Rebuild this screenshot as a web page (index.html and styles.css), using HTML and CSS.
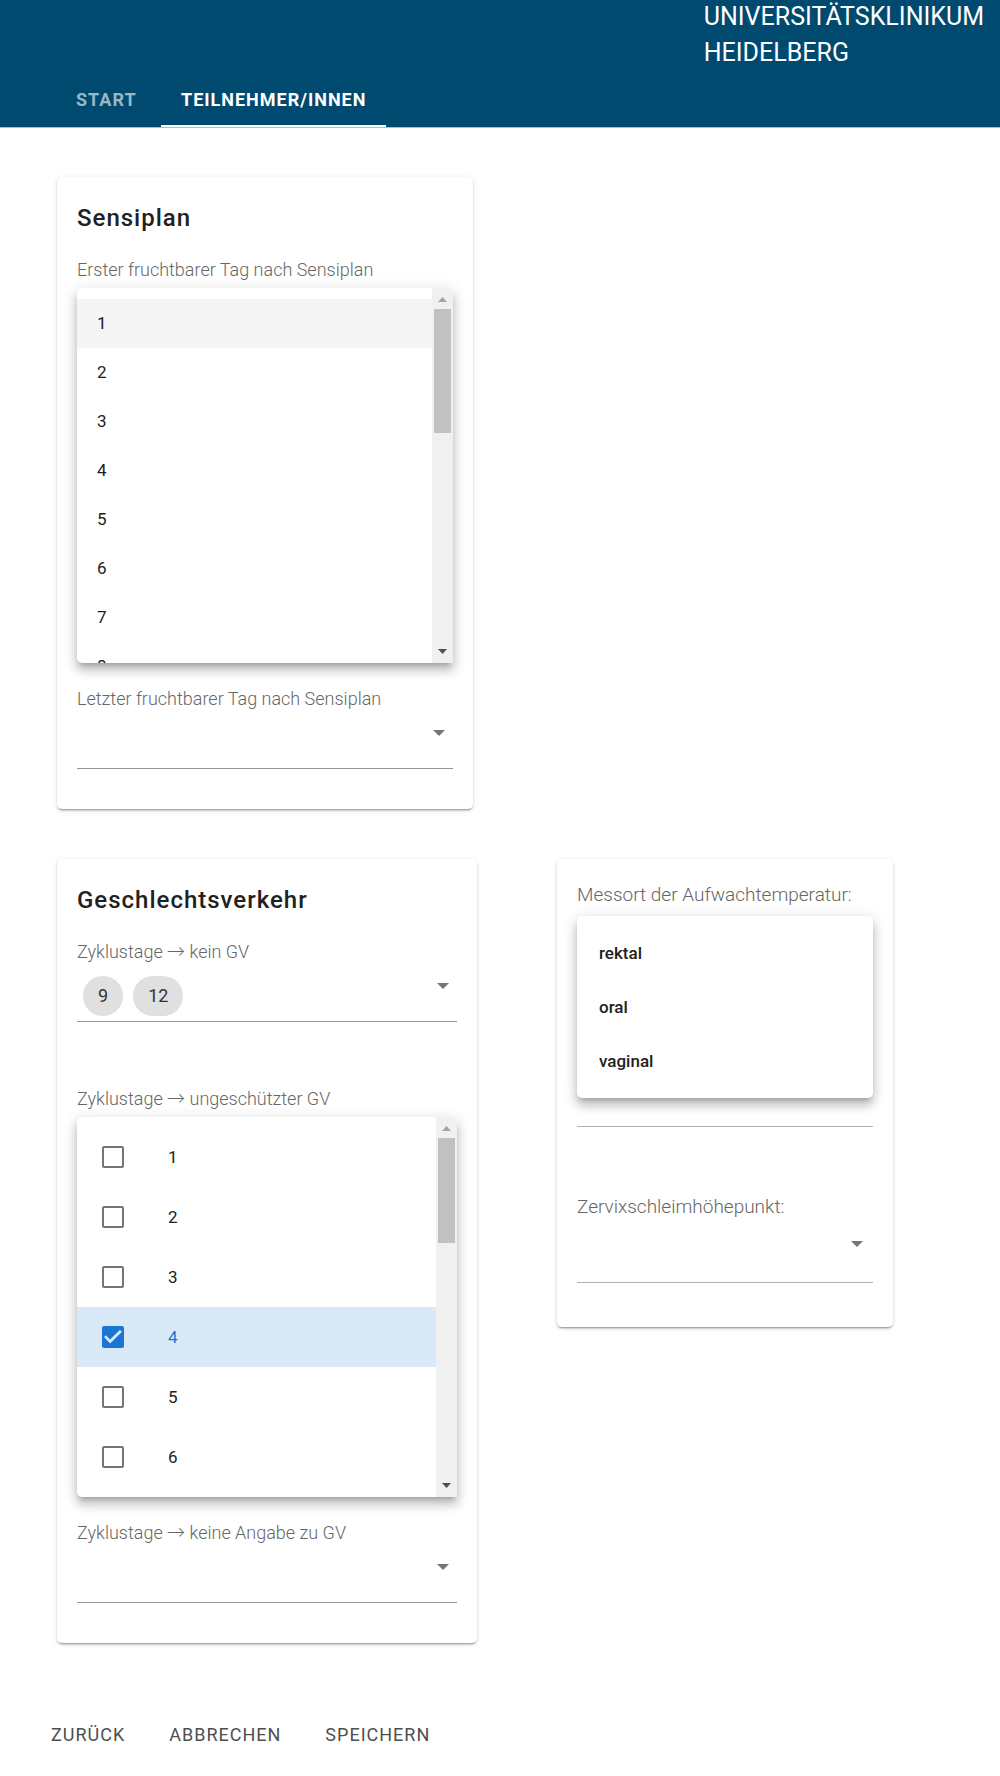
FILE: index.html
```html
<!DOCTYPE html>
<html lang="de">
<head>
  <meta charset="utf-8">
  <meta name="viewport" content="width=device-width, initial-scale=1">
  <title>Teilnehmer/innen</title>
  <link rel="stylesheet" href="styles.css">
</head>
<body>
  <header class="header">
    <p class="brand">UNIVERSITÄTSKLINIKUM<br>HEIDELBERG</p>
    <nav class="tabs">
      <a class="tab" href="#start">START</a>
      <a class="tab tab-active" href="#teilnehmer" aria-current="page">TEILNEHMER/INNEN</a>
    </nav>
  </header>

  <main class="content">
    <section class="card card-sensiplan">
      <h2 class="card-title">Sensiplan</h2>
      <div class="field">
        <span class="label" id="first-day">Erster fruchtbarer Tag nach Sensiplan</span>
        <div class="menu menu-scroll">
          <ul class="options options-days" role="listbox" aria-labelledby="first-day">
            <li class="option option-focus" role="option">1</li>
            <li class="option" role="option">2</li>
            <li class="option" role="option">3</li>
            <li class="option" role="option">4</li>
            <li class="option" role="option">5</li>
            <li class="option" role="option">6</li>
            <li class="option" role="option">7</li>
            <li class="option" role="option">8</li>
          </ul>
          <div class="scrollbar" aria-hidden="true">
            <svg class="scroll-up" width="9" height="5" viewBox="0 0 9 5"><path d="M0 5 4.500 0 9 5z"/></svg>
            <div class="track"><div class="thumb thumb-days"></div></div>
            <svg class="scroll-down" width="9" height="5" viewBox="0 0 9 5"><path d="M0 0h9L4.500 5z"/></svg>
          </div>
        </div>
      </div>
      <div class="field">
        <label class="label" for="last-day">Letzter fruchtbarer Tag nach Sensiplan</label>
        <div class="control">
          <select class="select" id="last-day"><option value=""></option></select>
          <svg class="arrow" width="12" height="6" viewBox="0 0 12 6" aria-hidden="true"><path d="M0 0h12L6 6z"/></svg>
        </div>
      </div>
    </section>

    <section class="card card-cycle">
      <h2 class="card-title">Geschlechtsverkehr</h2>
      <div class="field field-spaced">
        <span class="label" id="none-days">Zyklustage → kein GV</span>
        <button class="control chips" type="button" aria-labelledby="none-days">
          <span class="chip">9</span>
          <span class="chip">12</span>
          <svg class="arrow" width="12" height="6" viewBox="0 0 12 6" aria-hidden="true"><path d="M0 0h12L6 6z"/></svg>
        </button>
      </div>
      <div class="field">
        <span class="label" id="unprotected-days">Zyklustage → ungeschützter GV</span>
        <div class="menu menu-scroll">
          <div class="options options-check" role="group" aria-labelledby="unprotected-days">
            <label class="check-option"><input class="check" type="checkbox">1</label>
            <label class="check-option"><input class="check" type="checkbox">2</label>
            <label class="check-option"><input class="check" type="checkbox">3</label>
            <label class="check-option check-selected"><input class="check" type="checkbox" checked>4</label>
            <label class="check-option"><input class="check" type="checkbox">5</label>
            <label class="check-option"><input class="check" type="checkbox">6</label>
          </div>
          <div class="scrollbar" aria-hidden="true">
            <svg class="scroll-up" width="9" height="5" viewBox="0 0 9 5"><path d="M0 5 4.500 0 9 5z"/></svg>
            <div class="track"><div class="thumb thumb-check"></div></div>
            <svg class="scroll-down" width="9" height="5" viewBox="0 0 9 5"><path d="M0 0h9L4.500 5z"/></svg>
          </div>
        </div>
      </div>
      <div class="field">
        <label class="label" for="unknown-days">Zyklustage → keine Angabe zu GV</label>
        <div class="control">
          <select class="select" id="unknown-days"><option value=""></option></select>
          <svg class="arrow" width="12" height="6" viewBox="0 0 12 6" aria-hidden="true"><path d="M0 0h12L6 6z"/></svg>
        </div>
      </div>
    </section>

    <section class="card card-measure">
      <div class="field field-open">
        <span class="label" id="place">Messort der Aufwachtemperatur:</span>
        <div class="menu menu-place">
          <ul class="options options-place" role="listbox" aria-labelledby="place">
            <li class="option" role="option">rektal</li>
            <li class="option" role="option">oral</li>
            <li class="option" role="option">vaginal</li>
          </ul>
        </div>
      </div>
      <div class="field">
        <label class="label" for="peak">Zervixschleimhöhepunkt:</label>
        <div class="control">
          <select class="select" id="peak"><option value=""></option></select>
          <svg class="arrow" width="12" height="6" viewBox="0 0 12 6" aria-hidden="true"><path d="M0 0h12L6 6z"/></svg>
        </div>
      </div>
    </section>
  </main>

  <footer class="actions">
    <button class="action" type="button">ZURÜCK</button>
    <button class="action" type="button">ABBRECHEN</button>
    <button class="action" type="button">SPEICHERN</button>
  </footer>
</body>
</html>
```
FILE: styles.css
```css
* {
  box-sizing: border-box;
}

body {
  margin: 0;
  background: #fff;
  color: #212121;
  font-family: Roboto, "Noto Sans CJK JP", sans-serif;
  font-size: 18px;
}

.header {
  display: flex;
  flex-direction: column;
  background: #004a6f;
  border-bottom: 1px solid #a8bfcc;
}

.brand {
  align-self: flex-end;
  margin: -1px 0 0;
  padding-right: 16px;
  color: #fff;
  font-size: 25px;
  line-height: 36px;
}

.tabs {
  display: flex;
  padding-left: 56px;
}

.tab {
  display: flex;
  align-items: center;
  min-width: 105px;
  height: 56px;
  padding: 0 20px;
  color: #99b7c5;
  font-size: 18px;
  font-weight: 700;
  letter-spacing: 1px;
  text-decoration: none;
}

.tab-active {
  color: #fff;
  box-shadow: inset 0 -2px #fff;
}

.content {
  display: grid;
  grid-template-columns: minmax(0, 420px) minmax(0, 336px);
  align-items: start;
  gap: 50px 80px;
  padding: 49px 57px 0;
}

.card {
  padding: 25px 20px 40px;
  border-radius: 5px;
  background: #fff;
  box-shadow: 0 3px 1px -2px rgba(0, 0, 0, 0.2), 0 2px 2px rgba(0, 0, 0, 0.14), 0 1px 5px rgba(0, 0, 0, 0.12);
}

.card-sensiplan {
  margin-right: 4px;
}

.card-cycle {
  grid-row: 2;
}

.card-measure {
  grid-row: 2;
  padding-top: 24px;
  padding-bottom: 44px;
}

.card-title {
  margin: 0 0 24px;
  font-size: 24px;
  font-weight: 500;
  letter-spacing: 1px;
  line-height: 32px;
}

.field {
  display: flex;
  flex-direction: column;
}

.field-spaced {
  margin-bottom: 65px;
}

.label {
  color: #666;
  font-size: 18px;
  font-weight: 300;
  line-height: 24px;
}

.control {
  display: flex;
  justify-content: flex-end;
  position: relative;
  height: 58px;
  padding: 0;
  border: 0;
  border-bottom: 1px solid #949494;
  background: none;
}

.select {
  flex: 1;
  appearance: none;
  border: 0;
  background: none;
  font: inherit;
}

.arrow {
  position: absolute;
  top: 19px;
  right: 8px;
  fill: #757575;
}

.chips {
  align-items: flex-end;
  justify-content: flex-start;
  gap: 10px;
  padding: 0 6px 5px;
}

.chip {
  min-width: 40px;
  padding: 0 15px;
  border-radius: 20px;
  background: #e0e0e0;
  color: #333;
  font-family: Roboto, sans-serif;
  font-size: 18px;
  line-height: 40px;
}

.menu {
  display: flex;
  margin: 6px 0 24px;
  border-radius: 5px;
  background: #fff;
  box-shadow: 0 5px 5px -3px rgba(0, 0, 0, 0.2), 0 8px 10px 1px rgba(0, 0, 0, 0.14), 0 3px 14px 2px rgba(0, 0, 0, 0.12);
  overflow: hidden;
}

.menu-scroll {
  border-bottom-right-radius: 0;
}

.options {
  flex: 1;
  margin: 0;
  padding: 10px 0;
  overflow: hidden;
  font-size: 17px;
  list-style: none;
}

.options-days {
  height: 375px;
  padding-top: 11px;
}

.options-days .option {
  padding-left: 20px;
  line-height: 49px;
}

.option-focus {
  background: #f5f5f5;
}

.scrollbar {
  display: flex;
  flex-direction: column;
  align-items: center;
  width: 21px;
  padding: 9px 0;
  background: #f0f0f0;
}

.track {
  flex: 1;
  width: 17px;
  margin: 7px 0;
}

.thumb {
  background: #c1c1c1;
}

.thumb-days {
  height: 124px;
}

.thumb-check {
  height: 105px;
}

.scroll-up {
  fill: #a3a3a3;
}

.scroll-down {
  fill: #505050;
}

.check-option {
  display: flex;
  align-items: center;
  gap: 44px;
  height: 60px;
  padding-left: 25px;
}

.check-selected {
  background: #dae9f8;
  color: #1976d2;
}

.check {
  display: grid;
  place-items: center;
  appearance: none;
  width: 22px;
  height: 22px;
  margin: 0;
  border: 2px solid #757575;
  border-radius: 2px;
}

.check:checked {
  border-color: #1976d2;
  background: #1976d2;
}

.check:checked::before {
  content: "";
  width: 18px;
  height: 14px;
  background: #dae9f8;
  clip-path: polygon(0 50%, 11% 38%, 33% 68%, 88% 0, 100% 12%, 34% 97%);
}

.card-measure .label {
  font-size: 19px;
}

.field-open {
  margin-bottom: 68px;
  border-bottom: 1px solid #b0b0b0;
}

.menu-place {
  margin: 9px 0 28px;
}

.options-place {
  font-weight: 500;
}

.options-place .option {
  padding-left: 22px;
  line-height: 54px;
}

.card-measure .control {
  height: 64px;
  border-bottom-color: #b0b0b0;
}

.card-measure .arrow {
  top: 22px;
  right: 10px;
}

.actions {
  display: flex;
  flex-wrap: wrap;
  gap: 44px;
  padding: 80px 51px 24px;
}

.action {
  padding: 0;
  border: 0;
  background: none;
  color: #4f4f4f;
  font-family: Roboto, sans-serif;
  font-size: 18px;
  letter-spacing: 1px;
  line-height: 24px;
}
```
